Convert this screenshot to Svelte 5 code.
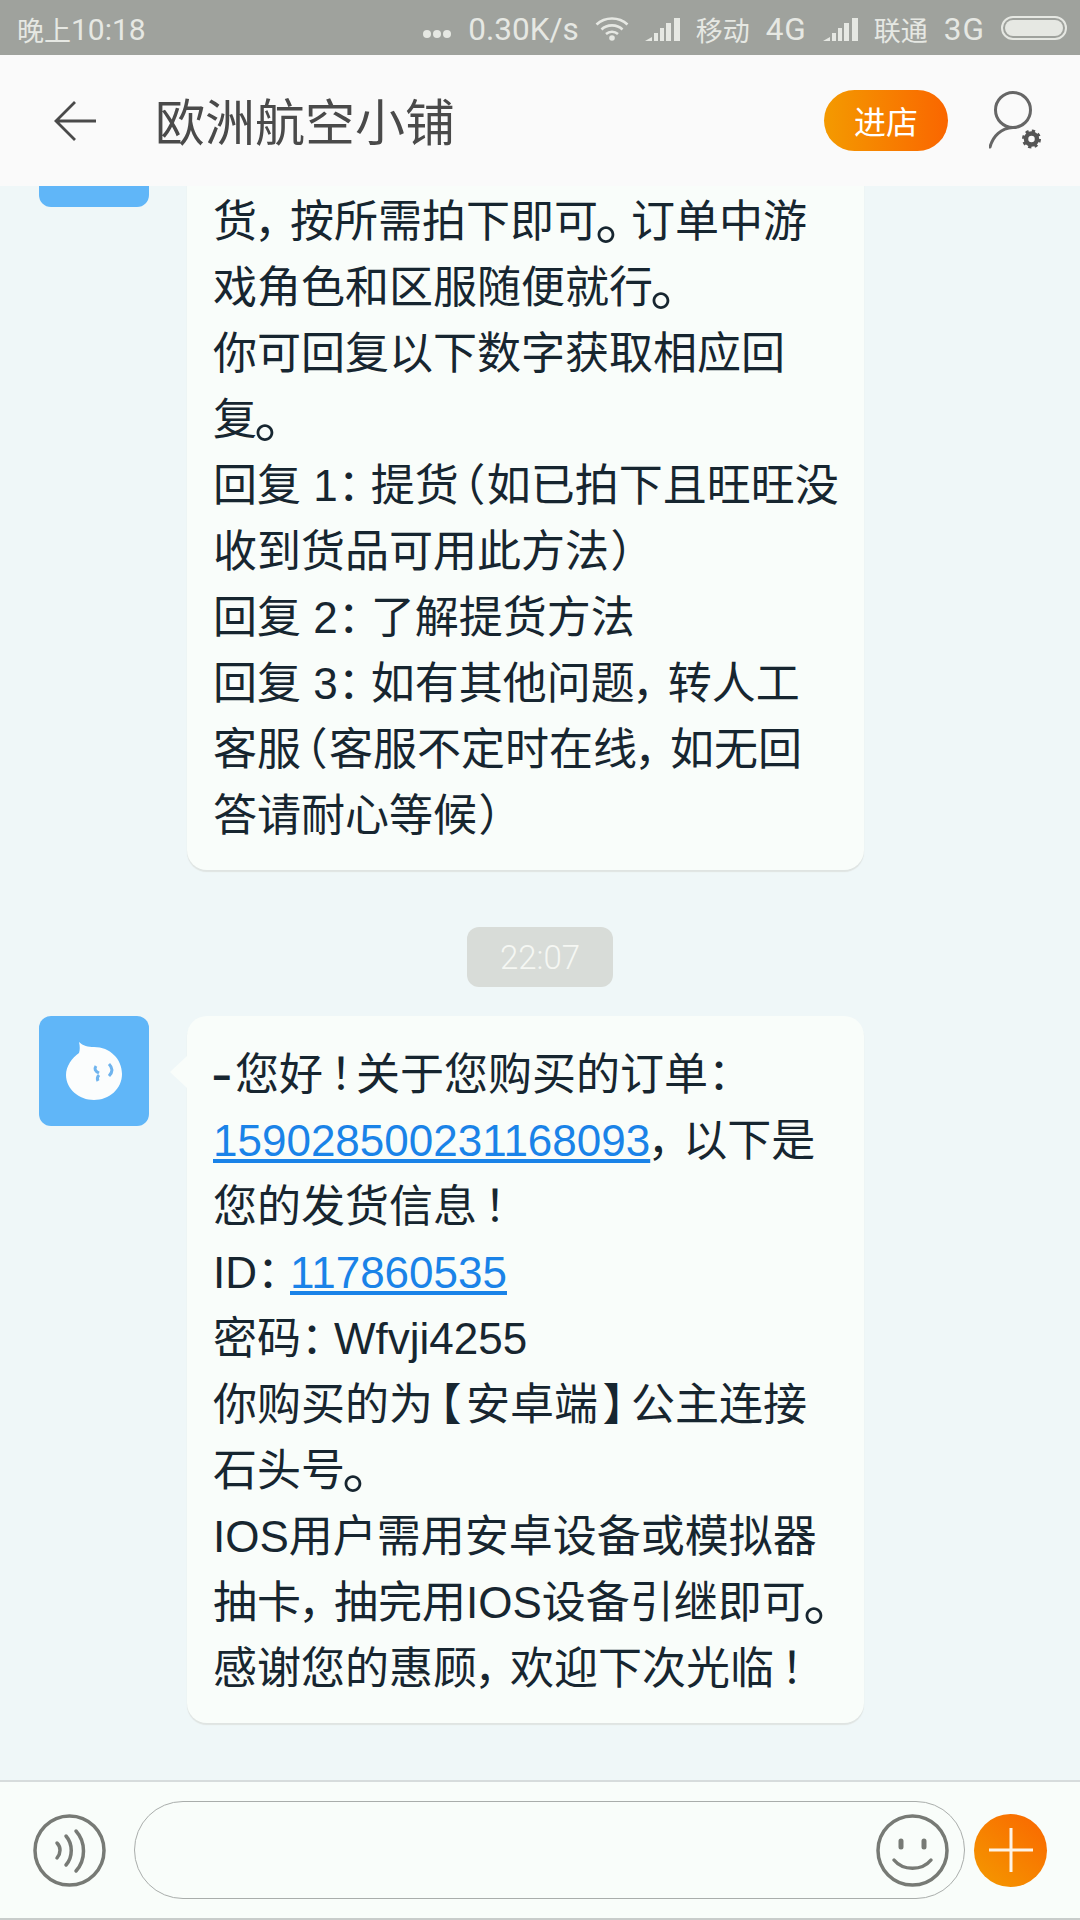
<script>
  const first = ['货，按所需拍下即可。订单中游','戏角色和区服随便就行。','你可回复以下数字获取相应回','复。','回复 1：提货（如已拍下且旺旺没','收到货品可用此方法）','回复 2：了解提货方法','回复 3：如有其他问题，转人工','客服（客服不定时在线，如无回','答请耐心等候）'];
  const second = ['–您好！关于您购买的订单：','[[159028500231168093]]，以下是','您的发货信息！','ID：[[117860535]]','密码：Wfvji4255','你购买的为【安卓端】公主连接','石头号。','IOS用户需用安卓设备或模拟器','抽卡，抽完用IOS设备引继即可。','感谢您的惠顾，欢迎下次光临！'];

  function parts(line) {
    return line.split(/(\[\[.*?\]\]|[–，。：！（）【】])/).filter(Boolean).map((t) => {
      if (t.startsWith('[[')) return { kind: 'link', t: t.slice(2, -2) };
      if (t === '–') return { kind: 'dash', t };
      if (t === '（' || t === '）') return { kind: 'paren', t };
      if (t === '。') return { kind: 'stop', t };
      if (t === '！') return { kind: 'bang', t };
      if (t === '，' || t === '：') return { kind: 'tight', t };
      if (t === '【' || t === '】') return { kind: 'bracket', t };
      return { kind: 'text', t };
    });
  }
</script>

{#snippet line(text)}
  <div class="line">
    {#each parts(text) as p}
      {#if p.kind === 'link'}<a href="#m">{p.t}</a>{:else if p.kind === 'text'}{p.t}{:else}<span class="punct {p.kind}">{p.t}</span>{/if}
    {/each}
  </div>
{/snippet}

<div class="phone">
  <header class="top">
    <div class="status">
      <span class="clock"><span class="cjk">晚上</span>10:18</span>
      <div class="status-right">
        <svg class="dots" width="30" height="8" viewBox="0 0 30 8"><circle cx="5" cy="4" r="4"/><circle cx="15" cy="4" r="4"/><circle cx="25" cy="4" r="4"/></svg>
        <span class="speed">0.30K/s</span>
        <svg width="34" height="24" viewBox="0 0 34 24" fill="none" stroke="#e6e8e3" stroke-width="2.6"><path d="M1.500 7.500C10 -0.500 24 -0.500 32.500 7.500"/><path d="M6.500 12.500C12 7 22 7 27.500 12.500"/><path d="M11 17C14.500 14 19.500 14 23 17"/><circle cx="17" cy="21" r="2.800" fill="#e6e8e3" stroke="none"/></svg>
        <svg class="bars" width="35" height="23" viewBox="0 0 35 23"><path d="M0 23L7 19V23ZM9 15h4v8H9ZM15 10h4v13h-4ZM21 5h5v18h-5ZM29 0h6v23h-6Z"/></svg>
        <span class="cjk">移动</span><span class="net">4G</span>
        <svg class="bars" width="35" height="23" viewBox="0 0 35 23"><path d="M0 23L7 19V23ZM9 15h4v8H9ZM15 10h4v13h-4ZM21 5h5v18h-5ZM29 0h6v23h-6Z"/></svg>
        <span class="cjk">联通</span><span class="net">3G</span>
        <div class="battery"><div class="charge"></div></div>
      </div>
    </div>
    <nav class="bar">
      <svg class="back" width="42" height="40" viewBox="0 0 42 40" fill="none" stroke="#4a4a4a" stroke-width="2.800"><path d="M21 1L2 20L21 39M2 20H42"/></svg>
      <h1>欧洲航空小铺</h1>
      <button class="enter">进店</button>
      <svg class="user" width="54" height="58" viewBox="0 0 54 58" fill="none"><circle cx="24" cy="19" r="17.500" stroke="#666" stroke-width="3"/><path d="M1 56C4 45 12 37 24 36.500" stroke="#666" stroke-width="3" stroke-linecap="round"/><circle cx="42.500" cy="48" r="5.500" stroke="#555" stroke-width="4.500"/><circle cx="42.500" cy="48" r="8" stroke="#555" stroke-width="3" stroke-dasharray="3.150 3.150"/></svg>
    </nav>
  </header>

  <main class="chat">
    <div class="scroll">
      <section class="msg">
        <div class="avatar"></div>
        <div class="bubble">
          <div class="line">&nbsp;</div>
          {#each first as l}{@render line(l)}{/each}
        </div>
      </section>
      <div class="time"><span>22:07</span></div>
      <section class="msg">
        <div class="avatar">
          <svg width="56" height="58" viewBox="0 0 56 58"><path d="M13 0C17 4 22 5 28 5C44 5 56 17 56 32C56 47 43 58 28 58C13 58 0 47 0 33C0 24 6 16 13 11C14 8 14 4 13 0Z" fill="#fbfdfd"/><path d="M30 24C28 27 29 29 33 31M33 33C31 35 31 37 32 39" stroke="#6fb4ee" stroke-width="3" fill="none"/><path d="M43 22C47 26 47 30 43 34" stroke="#6fb4ee" stroke-width="3" fill="none"/></svg>
        </div>
        <div class="bubble tail">
          {#each second as l}{@render line(l)}{/each}
        </div>
      </section>
    </div>
  </main>

  <footer class="input">
    <svg width="73" height="73" viewBox="0 0 73 73" fill="none" stroke="#777a75" stroke-linecap="round"><circle cx="36.500" cy="36.500" r="34.500" stroke-width="3.500"/><path d="M24 29C28 33 28 39 24 44M33 22C40 30 40 43 33 51M43 17C53 28 53 46 43 57" stroke-width="3.500"/></svg>
    <div class="field">
      <svg width="73" height="73" viewBox="0 0 73 73" fill="none" stroke="#777a75" stroke-linecap="round"><circle cx="36.500" cy="36.500" r="34.500" stroke-width="3.500"/><path d="M25 27v6M48 27v6" stroke-width="5"/><path d="M18 46C27 57 46 57 55 46" stroke-width="3.500"/></svg>
    </div>
    <div class="plus"><svg width="44" height="44" viewBox="0 0 44 44" stroke="#fdf3e6" stroke-width="3"><path d="M0 22H44M22 0V44"/></svg></div>
  </footer>
</div>

<style>
  :global(body) { margin: 0; background: #eff7f8; }
  .phone {
    width: 1080px; height: 1920px; overflow: hidden; position: relative;
    display: flex; flex-direction: column; background: #eff7f8;
    font-family: Roboto, "Noto Sans CJK SC", sans-serif;
  }
  .top { flex: none; position: relative; z-index: 2; }
  .status {
    height: 55px; background: #9fa29d; color: #e6e8e3; font-size: 31.500px;
    display: flex; align-items: center; justify-content: space-between; padding: 3px 13px 0 17px; box-sizing: border-box;
  }
  .status-right { display: flex; align-items: center; gap: 16px; }
  .cjk { font-size: 27px; font-family: "Noto Sans CJK SC", sans-serif; }
  .clock { display: flex; align-items: center; font-size: 30px; }
  .dots { fill: #e6e8e3; margin-top: 9px; }
  .bars { fill: #e6e8e3; }
  .net { letter-spacing: 1px; }
  .battery { width: 66px; height: 24px; border: 2px solid #e6e8e3; border-radius: 12px; padding: 2px; box-sizing: border-box; margin-top: -3px; }
  .charge { height: 100%; background: #e6e8e3; border-radius: 8px; }
  .bar { height: 131px; background: #fafafa; display: flex; align-items: center; padding: 0 37px 0 54px; box-sizing: border-box; }
  .back { flex: none; margin-right: 59px; }
  h1 { margin: -4px 0 0; flex: 1; font-size: 50px; font-weight: 400; color: #4a4a4a; font-family: "Noto Sans CJK SC", sans-serif; }
  .enter {
    width: 124px; height: 61px; border: 0; border-radius: 31px; padding: 0 0 2px;
    background: linear-gradient(90deg, #f49a00, #fa6600); color: #fff; font-size: 32px;
    font-family: "Noto Sans CJK SC", sans-serif; margin-right: 41px;
  }
  .user { flex: none; margin-top: -1px; }
  .chat { flex: 1; overflow: hidden; min-height: 0; }
  .scroll { margin-top: -89px; }
  .msg { display: flex; align-items: flex-start; padding-left: 39px; gap: 38px; }
  .avatar {
    width: 110px; height: 110px; flex: none; border-radius: 12px; background: #60b6f8;
    display: flex; align-items: center; justify-content: center;
  }
  .bubble {
    width: 677px; box-sizing: border-box; padding: 26px 10px 21px 26px; position: relative;
    background: #f9fdfa; border-radius: 20px; box-shadow: 0 2px 1px #dfe4e2;
    color: #172630; font-size: 44px; line-height: 66px;
    font-family: "Liberation Sans", "Noto Sans CJK SC", sans-serif;
  }
  .line { white-space: nowrap; display: flex; align-items: baseline; height: 66px; }
  .punct {
    display: inline-block; width: 33px; box-sizing: border-box; text-align: center; flex: none; line-height: 44px;
    font-family: "Noto Sans CJK SC", sans-serif; font-feature-settings: "palt";
  }
  .paren { width: 28px; }
  .tight { text-align: left; }
  .bang { text-align: left; padding-left: 7px; }
  .stop { text-align: left; transform: scale(1.25); transform-origin: 40% 72%; }
  .dash {
    width: 22px; text-align: left; font-family: "Liberation Sans", sans-serif; font-weight: 700;
    transform: scaleX(0.72); transform-origin: left center;
  }
  .tail::before {
    content: ""; position: absolute; left: -17px; top: 40px; border-style: solid;
    border-width: 16px 17px 16px 0; border-color: transparent #f9fdfa transparent transparent;
  }
  a { color: #1a83e8; }
  .time { display: flex; justify-content: center; margin: 57px 0 29px; }
  .time span {
    width: 146px; height: 60px; border-radius: 12px; background: #d8dcd8; color: #f5f7f3;
    font-size: 33px; font-weight: 300; display: flex; align-items: center; justify-content: center;
  }
  .input {
    flex: none; height: 140px; box-sizing: border-box; background: #f9fdfa;
    border-top: 2px solid #d7dcdc; border-bottom: 2px solid #c9cdcb;
    display: flex; align-items: center; padding: 0 33px;
  }
  .field {
    flex: 1; height: 98px; box-sizing: border-box; margin: 0 9px 0 28px; border: 1.500px solid #a9adab; border-radius: 49px;
    display: flex; align-items: center; justify-content: flex-end; padding-right: 15px;
  }
  .plus {
    width: 73px; height: 73px; border-radius: 50%; flex: none;
    background: linear-gradient(40deg, #f49a00, #fa6600);
    display: flex; align-items: center; justify-content: center;
  }
</style>
